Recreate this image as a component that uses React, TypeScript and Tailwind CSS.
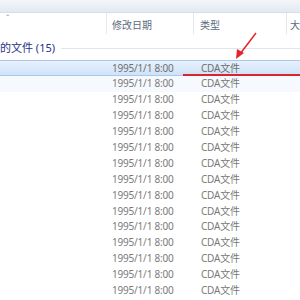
const rows = Array.from({ length: 15 }, () => ({ date: "1995/1/1 8:00", type: "CDA文件" }));

const font = { fontFamily: "'Noto Sans', 'Noto Sans CJK SC', sans-serif" };

export default function App() {
  return (
    <div className="relative w-[300px] h-[300px] overflow-hidden bg-white text-[10px]" style={font}>
      {/* toolbar bottom */}
      <div className="h-[13px] bg-gradient-to-b from-[#f3f6fa] to-[#e2e9f1] border-b border-[#d6dee8]" />

      {/* column headers */}
      <div className="flex h-[21px] text-[#5b6b80] leading-[24px]">
        <div className="relative w-[107px] border-r border-[#e4e9ef]">
          <span className="absolute left-[6px] -top-[6px] text-[8px] text-[#8a9bb0]">ˆ</span>
        </div>
        <div className="w-[87px] pl-[5px] border-r border-[#e4e9ef]">修改日期</div>
        <div className="w-[93px] pl-[6px] border-r border-[#e4e9ef]">类型</div>
        <div className="flex-1 pl-[3px]">大</div>
      </div>

      {/* group header */}
      <div className="flex items-center h-[24px] mt-[2px]">
        <span className="text-[11px] text-[#1e3287] whitespace-nowrap">的文件 (15)</span>
        <div className="flex-1 ml-[6px] h-px bg-[#dfe6ee]" />
      </div>

      {/* file rows */}
      <div className="flex flex-col">
        {rows.map((r, i) => (
          <div
            key={i}
            className={
              i === 0
                ? "flex items-center h-[16px] text-[#6f6f6f] bg-gradient-to-b from-[#e8f1fc] to-[#cfe2f8] border-y border-[#a9c8ee]"
                : i === 1
                ? "flex items-center h-[15.9px] text-[#7a7a7a] bg-[#f6f9fd]"
                : "flex items-center h-[15.9px] text-[#7a7a7a]"
            }
          >
            <div className="w-[112px]" />
            <div className="w-[89px] whitespace-nowrap tracking-[-0.2px]">{r.date}</div>
            <div className="whitespace-nowrap tracking-[-0.2px]">{r.type}</div>
          </div>
        ))}
      </div>

      {/* annotation: red arrow and underline */}
      <svg className="absolute left-0 top-0 pointer-events-none" width="300" height="300">
        <line x1="256" y1="33" x2="240" y2="54" stroke="#e3262a" strokeWidth="1.5" />
        <polygon points="236,59 237,49 244,53" fill="#e3262a" />
      </svg>
      <div className="absolute left-[183px] top-[74px] w-[117px] h-[2px] bg-[#d9262c]" />
    </div>
  );
}
